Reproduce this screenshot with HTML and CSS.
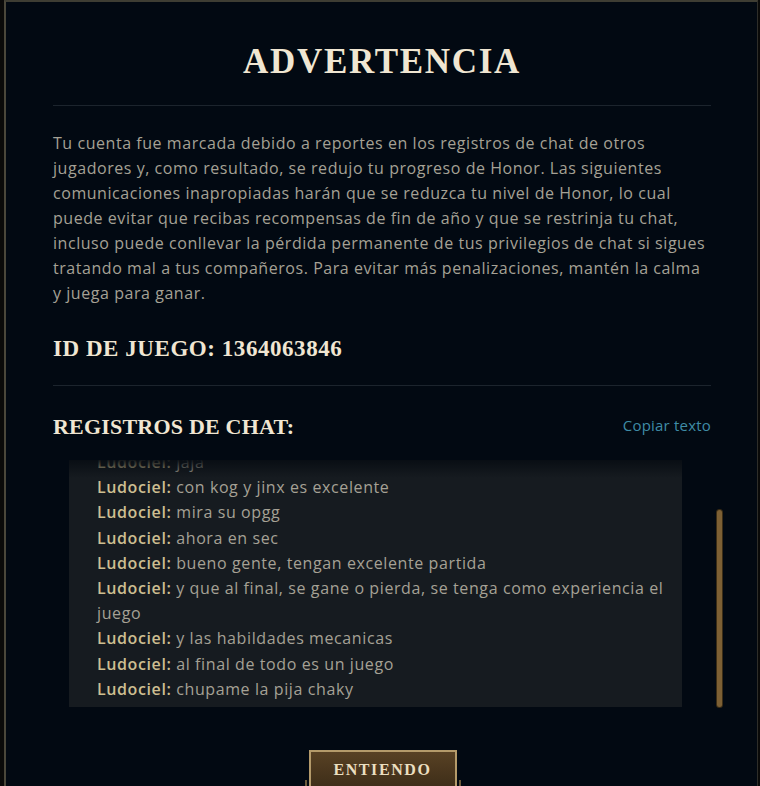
FILE: index.html
```html
<!DOCTYPE html>
<html lang="es">
<head>
<meta charset="utf-8">
<title>Advertencia</title>
<link rel="stylesheet" href="styles.css">
</head>
<body>
<div class="backdrop">
  <section class="dialog">
    <h1 class="title">ADVERTENCIA</h1>
    <hr class="rule">
    <p class="message">Tu cuenta fue marcada debido a reportes en los registros de chat de otros<br>jugadores y, como resultado, se redujo tu progreso de Honor. Las siguientes<br>comunicaciones inapropiadas harán que se reduzca tu nivel de Honor, lo cual<br>puede evitar que recibas recompensas de fin de año y que se restrinja tu chat,<br>incluso puede conllevar la pérdida permanente de tus privilegios de chat si sigues<br>tratando mal a tus compañeros. Para evitar más penalizaciones, mantén la calma<br>y juega para ganar.</p>
    <h2 class="game-id">ID DE JUEGO: 1364063846</h2>
    <hr class="rule rule-low">
    <div class="logs-head">
      <h2 class="logs-title">REGISTROS DE CHAT:</h2>
      <a class="copy" href="#">Copiar texto</a>
    </div>
    <div class="logs">
      <div class="chat-box">
        <ul class="chat">
          <li><b>Ludociel:</b> jaja</li>
          <li><b>Ludociel:</b> con kog y jinx es excelente</li>
          <li><b>Ludociel:</b> mira su opgg</li>
          <li><b>Ludociel:</b> ahora en sec</li>
          <li><b>Ludociel:</b> bueno gente, tengan excelente partida</li>
          <li><b>Ludociel:</b> y que al final, se gane o pierda, se tenga como experiencia el juego</li>
          <li><b>Ludociel:</b> y las habildades mecanicas</li>
          <li><b>Ludociel:</b> al final de todo es un juego</li>
          <li><b>Ludociel:</b> chupame la pija chaky</li>
        </ul>
        <div class="fade"></div>
      </div>
      <div class="scroll-track"><div class="scroll-thumb"></div></div>
    </div>
    <div class="actions">
      <button class="btn" type="button">ENTIENDO</button>
    </div>
  </section>
</div>
</body>
</html>
```
FILE: styles.css
```css
html, body {
  margin: 0;
  padding: 0;
  background: #0a0a09;
  height: 100%;
  overflow: hidden;
}

.backdrop {
  padding: 0 2px 0 4px;
  height: 100%;
  box-sizing: border-box;
}

.dialog {
  box-sizing: border-box;
  height: 100%;
  background: #020912;
  border-top: 2px solid #3e3d33;
  border-left: 2px solid #4a473a;
  border-right: 1px solid #2e2e2a;
  padding: 0 46px 0 47px;
  font-family: "Open Sans", "Noto Sans", sans-serif;
}

.title {
  margin: 0;
  padding-top: 40px;
  height: 62px;
  box-sizing: border-box;
  font-family: "Liberation Serif", serif;
  font-weight: 700;
  font-size: 35px;
  line-height: 40px;
  letter-spacing: 1.7px;
  text-align: center;
  color: #f0e6d2;
}

.rule {
  margin: 41px 0 0;
  border: 0;
  height: 1px;
  background: #1c242d;
}

.message {
  margin: 25px 0 0;
  font-size: 16px;
  line-height: 25px;
  letter-spacing: 0.55px;
  color: #a5a195;
}

.game-id {
  margin: 29px 0 0;
  font-family: "Liberation Serif", serif;
  font-weight: 700;
  font-size: 23px;
  line-height: 28px;
  letter-spacing: 0.55px;
  color: #f0e6d2;
}

.rule-low {
  margin-top: 22px;
}

.logs-head {
  display: flex;
  align-items: center;
  justify-content: space-between;
  margin-top: 28px;
}

.logs-title {
  margin: 0;
  font-family: "Liberation Serif", serif;
  font-weight: 700;
  font-size: 22px;
  line-height: 26px;
  letter-spacing: 0.2px;
  color: #f0e6d2;
}

.copy {
  font-size: 15px;
  line-height: 18px;
  margin-top: -5px;
  letter-spacing: 0.2px;
  color: #3f8ca6;
  text-decoration: none;
}

.logs {
  display: flex;
  margin-top: 20px;
  margin-right: -20px;
}

.chat-box {
  position: relative;
  flex-shrink: 0;
  margin-left: 16px;
  width: 613px;
  height: 247px;
  overflow: hidden;
  background: #161b20;
  box-sizing: border-box;
  padding: 0 12px 0 28px;
}

.chat {
  list-style: none;
  margin: -10px 0 0;
  padding: 0;
  font-size: 16px;
  line-height: 25.2px;
  letter-spacing: 0.6px;
  color: #a5a195;
}

.chat b {
  color: #cdbe91;
  font-weight: 600;
}

.fade {
  position: absolute;
  left: 0;
  right: 0;
  top: 0;
  height: 18px;
  background: linear-gradient(rgba(8, 13, 19, 0.95), rgba(22, 27, 32, 0));
}

.scroll-track {
  flex-shrink: 0;
  margin-left: 35px;
  width: 5px;
  display: flex;
  flex-direction: column;
  justify-content: flex-end;
}

.scroll-thumb {
  height: 197px;
  border-radius: 3px;
  background: #7d6034;
  box-shadow: 0 0 0 1px #3b2d16;
}

.actions {
  display: flex;
  justify-content: center;
  margin-top: 43px;
}

.btn {
  position: relative;
  width: 148px;
  height: 40px;
  border: 2px solid #b49a6a;
  background: linear-gradient(#584124, #3d2d18);
  color: #ebdfc0;
  font-family: "Liberation Serif", serif;
  font-weight: 700;
  font-size: 16px;
  letter-spacing: 1.6px;
  padding: 0;
  margin-left: 1px;
}

.btn::before {
  content: "";
  position: absolute;
  left: -6px;
  right: -6px;
  top: 28px;
  height: 20px;
  border-left: 2px solid #6c5a3a;
  border-right: 2px solid #6c5a3a;
}
```
